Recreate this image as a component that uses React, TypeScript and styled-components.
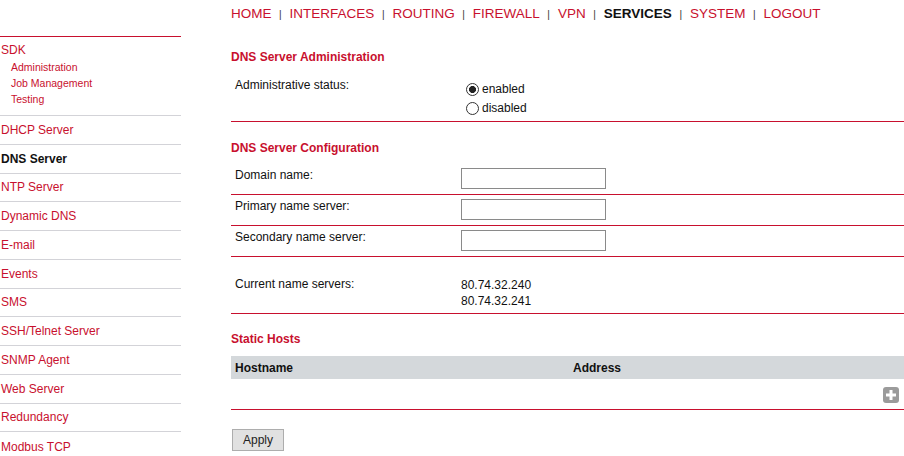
import styled, { createGlobalStyle } from "styled-components"

const RED = '#c8102e'

const GlobalStyle = createGlobalStyle`
  body {
    margin: 0;
    font-family: "Liberation Sans", Arial, sans-serif;
    font-size: 12px;
    color: #111;
    background: #fff;
  }
`

const NavData = ['HOME', 'INTERFACES', 'ROUTING', 'FIREWALL', 'VPN', 'SERVICES', 'SYSTEM', 'LOGOUT']
const SdkData = ['Administration', 'Job Management', 'Testing']
const MenuData = ['DHCP Server', 'DNS Server', 'NTP Server', 'Dynamic DNS', 'E-mail', 'Events', 'SMS',
  'SSH/Telnet Server', 'SNMP Agent', 'Web Server', 'Redundancy', 'Modbus TCP']

const Page = styled.div`
  display: flex;
  align-items: flex-start;
  width: 904px;
`

const Sidebar = styled.div`
  width: 181px;
  margin-top: 36px;
  border-top: 1px solid ${RED};
`

const SdkGroup = styled.div`
  padding: 6px 0 8px 1px;
  border-bottom: 1px solid #d3d3d8;
`

const SdkTitle = styled.a`
  display: block;
  color: ${RED};
  font-size: 12px;
  line-height: 14px;
  margin-bottom: 2px;
`

const SdkItem = styled.a`
  display: block;
  color: ${RED};
  font-size: 10.5px;
  line-height: 16px;
  padding-left: 10px;
`

const MenuItem = styled.a<{ active?: boolean }>`
  display: flex;
  align-items: center;
  box-sizing: border-box;
  height: 28.75px;
  padding-left: 1px;
  font-size: 12px;
  border-bottom: 1px solid #d3d3d8;
  color: ${props => props.active ? '#111' : RED};
  font-weight: ${props => props.active ? 'bold' : 'normal'};

  &:last-child {
    border-bottom: 0;
  }
`

const Main = styled.div`
  margin-left: 50px;
  width: 673px;
`

const Nav = styled.div`
  display: flex;
  align-items: baseline;
  box-sizing: border-box;
  height: 28px;
  padding: 6px 0;
  line-height: 16px;
  font-size: 13.5px;
`

const NavItem = styled.a<{ active?: boolean }>`
  color: ${props => props.active ? '#111' : RED};
  font-weight: ${props => props.active ? 'bold' : 'normal'};
`

const NavSep = styled.span`
  font-size: 10px;
  line-height: 10px;
  color: #333;
  margin: 0 8px 0 7.5px;
`

const SectionTitle = styled.div<{ top: number }>`
  margin-top: ${props => props.top}px;
  font-weight: bold;
  font-size: 12px;
  line-height: 14px;
  color: ${RED};
`

const Rows = styled.div<{ top: number }>`
  margin-top: ${props => props.top}px;
`

const Row = styled.div`
  display: grid;
  grid-template-columns: 230px 1fr;
  border-bottom: 1px solid ${RED};
`

const Label = styled.div`
  padding: 4px;
  line-height: 14px;
`

const Value = styled.div<{ top?: number; bottom?: number }>`
  padding: ${props => props.top ?? 4}px 0 ${props => props.bottom ?? 4}px;
  line-height: 16px;
`

const RadioLine = styled.label`
  display: flex;
  align-items: center;
  box-sizing: border-box;
  height: 19px;
  padding-top: 1px;
`

const Radio = styled.input`
  appearance: none;
  width: 13px;
  height: 13px;
  margin: 0 3px 0 5px;
  border: 1px solid #333;
  border-radius: 50%;
  box-sizing: border-box;
  background: #fff;

  &:checked {
    background: radial-gradient(circle, #222 0 3.2px, #fff 3.8px);
  }
`

const TextInput = styled.input`
  box-sizing: border-box;
  width: 145px;
  height: 21px;
  margin: 0;
  border: 1px solid #8a8a8a;
  font-family: inherit;
  font-size: 12px;
  padding: 1px 3px;
`

const InputCell = styled.div`
  padding: 4px 0 5px;
  display: flex;
`

const TableHead = styled.div`
  display: grid;
  grid-template-columns: 338px 1fr;
  margin-top: 10px;
  height: 23px;
  align-items: center;
  background: #d4d8db;
  font-weight: bold;
`

const HeadCell = styled.div`
  padding-left: 4px;
`

const TableBody = styled.div`
  display: flex;
  justify-content: flex-end;
  padding: 8px 5px 6px 0;
  border-bottom: 1px solid ${RED};
`

const AddButton = styled.span`
  display: block;
  width: 16px;
  height: 16px;
`

const Apply = styled.button`
  margin: 19px 0 0 1px;
  width: 52px;
  height: 22px;
  padding: 0;
  background: #e1e1e1;
  border: 1px solid #adadad;
  font-family: inherit;
  font-size: 12px;
  color: #222;
`

const PlusIcon = () => (
  <AddButton>
    <svg width="16" height="16" viewBox="0 0 16 16">
      <rect x="0" y="0" width="16" height="16" rx="3" fill="#9b9b9b" />
      <rect x="6.5" y="3" width="3" height="10" fill="#fff" />
      <rect x="3" y="6.5" width="10" height="3" fill="#fff" />
    </svg>
  </AddButton>
)

const Navigation = () => (
  <Nav>
    {NavData.map((elt, i) => (
      <span key={elt}>
        <NavItem active={elt === 'SERVICES'}>{elt}</NavItem>
        {i < NavData.length - 1 && <NavSep>|</NavSep>}
      </span>
    ))}
  </Nav>
)

const Menu = () => (
  <Sidebar>
    <SdkGroup>
      <SdkTitle>SDK</SdkTitle>
      {SdkData.map(elt => <SdkItem key={elt}>{elt}</SdkItem>)}
    </SdkGroup>
    {MenuData.map(elt => <MenuItem key={elt} active={elt === 'DNS Server'}>{elt}</MenuItem>)}
  </Sidebar>
)

export default function App() {
  return <Page>
    <GlobalStyle />
    <Menu />
    <Main>
      <Navigation />

      <SectionTitle top={22}>DNS Server Administration</SectionTitle>
      <Rows top={10}>
        <Row>
          <Label>Administrative status:</Label>
          <Value top={5} bottom={4}>
            <RadioLine><Radio type="radio" name="status" defaultChecked />enabled</RadioLine>
            <RadioLine><Radio type="radio" name="status" />disabled</RadioLine>
          </Value>
        </Row>
      </Rows>

      <SectionTitle top={19}>DNS Server Configuration</SectionTitle>
      <Rows top={9}>
        <Row>
          <Label>Domain name:</Label>
          <InputCell><TextInput /></InputCell>
        </Row>
        <Row>
          <Label>Primary name server:</Label>
          <InputCell><TextInput /></InputCell>
        </Row>
        <Row>
          <Label>Secondary name server:</Label>
          <InputCell><TextInput /></InputCell>
        </Row>
      </Rows>
      <Rows top={16}>
        <Row>
          <Label>Current name servers:</Label>
          <Value>80.74.32.240<br />80.74.32.241</Value>
        </Row>
      </Rows>

      <SectionTitle top={18}>Static Hosts</SectionTitle>
      <TableHead>
        <HeadCell>Hostname</HeadCell>
        <HeadCell>Address</HeadCell>
      </TableHead>
      <TableBody>
        <PlusIcon />
      </TableBody>
      <Apply>Apply</Apply>
    </Main>
  </Page>
}
